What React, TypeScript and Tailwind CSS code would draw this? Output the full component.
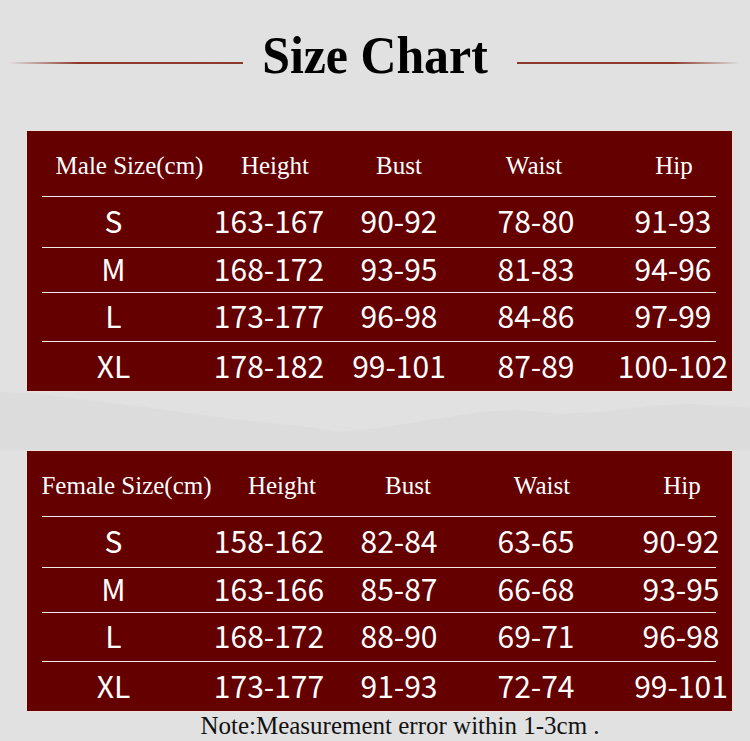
import React from "react";

interface SizeTable {
  label: string;
  headShift: string[];
  cellShift: string[];
  rows: string[][];
}

const cols = ["Height", "Bust", "Waist", "Hip"];
const rowHeights = ["h-[50px]", "h-[44px]", "h-[48px]", "h-[49px]"];

const tables: SizeTable[] = [
  {
    label: "Male Size(cm)",
    headShift: ["translate-x-[16px]", "translate-x-[6px]", "translate-x-0", "-translate-x-[2px]", "translate-x-[2px]"],
    cellShift: ["translate-x-0", "translate-x-0", "translate-x-0", "translate-x-0", "translate-x-[1px]"],
    rows: [
      ["S", "163-167", "90-92", "78-80", "91-93"],
      ["M", "168-172", "93-95", "81-83", "94-96"],
      ["L", "173-177", "96-98", "84-86", "97-99"],
      ["XL", "178-182", "99-101", "87-89", "100-102"],
    ],
  },
  {
    label: "Female Size(cm)",
    headShift: ["translate-x-[13px]", "translate-x-[13px]", "translate-x-[9px]", "translate-x-[6px]", "translate-x-[10px]"],
    cellShift: ["translate-x-0", "translate-x-0", "translate-x-0", "translate-x-0", "translate-x-[9px]"],
    rows: [
      ["S", "158-162", "82-84", "63-65", "90-92"],
      ["M", "163-166", "85-87", "66-68", "93-95"],
      ["L", "168-172", "88-90", "69-71", "96-98"],
      ["XL", "173-177", "91-93", "72-74", "99-101"],
    ],
  },
];

const Table = ({ t }: { t: SizeTable }) => {
  return (
    <div className="ml-[26px] mr-[17px] h-[262px] shrink-0 border border-[#f1dede] bg-[#650000] text-white">
      <div className="grid h-[65px] translate-y-[2px] grid-cols-[173px_138px_122px_152px_120px] items-center font-['Liberation_Serif',serif] text-[25px] leading-none">
        {[t.label, ...cols].map((h, i) => (
          <div key={h} className={`text-center whitespace-nowrap ${t.headShift[i]}`}>
            {h}
          </div>
        ))}
      </div>
      {t.rows.map((r, ri) => (
        <div key={ri}>
          <div className="ml-[15px] mr-[16px] h-px bg-[#f4e9e9]" />
          <div
            className={`grid -translate-y-[2px] grid-cols-[173px_138px_122px_152px_120px] items-center font-['Noto_Sans_CJK_SC','Noto_Sans',sans-serif] text-[30px] leading-none ${rowHeights[ri]}`}
          >
            {r.map((c, i) => (
              <div key={i} className={`text-center whitespace-nowrap ${t.cellShift[i]}`}>
                {c}
              </div>
            ))}
          </div>
        </div>
      ))}
    </div>
  );
};

export default function App() {
  return (
    <div className="flex h-[741px] w-[750px] flex-col overflow-hidden bg-[#e1e1e1]">
      {/* title */}
      <div className="flex h-[130px] shrink-0 items-start pt-[29px]">
        <div className="ml-[8px] mt-[33px] h-[2px] w-[235px] bg-gradient-to-r from-transparent via-[#8e3b2c] via-30% to-[#8a3a2b]" />
        <div className="flex w-[274px] justify-center pr-[11px]">
          <h1 className="scale-x-[0.94] font-['Liberation_Serif',serif] text-[53px] font-bold leading-none text-black">
            Size Chart
          </h1>
        </div>
        <div className="mt-[33px] h-[2px] w-[223px] bg-gradient-to-r from-[#8a3a2b] via-[#8e3b2c] via-70% to-transparent" />
      </div>

      <Table t={tables[0]} />

      {/* faint hills between tables */}
      <svg className="h-[58px] w-[750px] shrink-0" viewBox="0 0 750 58" preserveAspectRatio="none">
        <path
          d="M0 0 L40 2 L70 6 L120 12 L180 20 L240 28 L300 34 L340 40 L380 36 L430 28 L480 20 L520 18 L560 22 L600 20 L650 14 L690 12 L750 16 L750 58 L0 58 Z"
          fill="#d8d8d8"
          opacity="0.5"
        />
      </svg>

      <Table t={tables[1]} />

      <div className="pl-[50px] pt-[1px] text-center font-['Liberation_Serif',serif] text-[25px] leading-none text-[#111]">
        Note:Measurement error within 1-3cm .
      </div>
    </div>
  );
}
